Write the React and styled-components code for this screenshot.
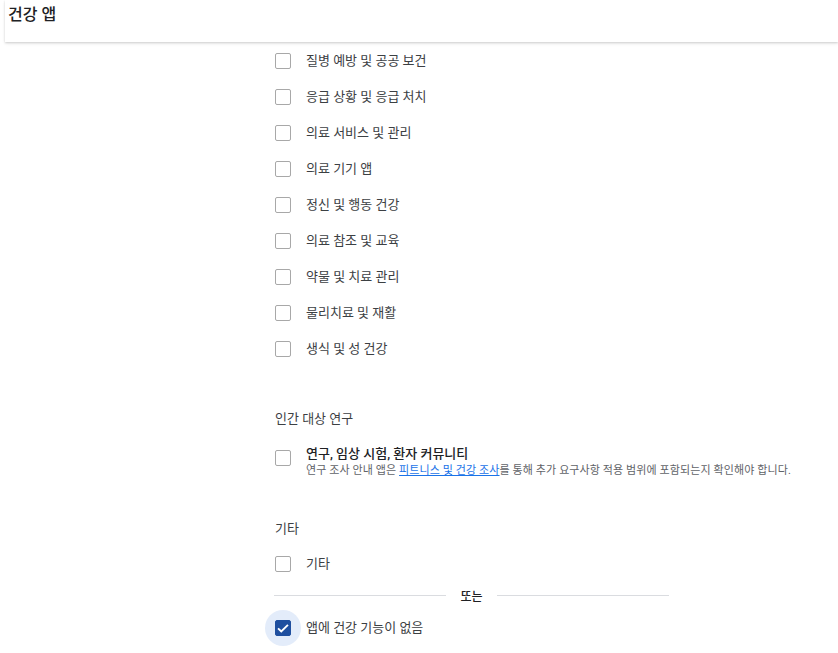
import React from "react";
import styled, { createGlobalStyle } from "styled-components";

const Global = createGlobalStyle`
  html, body { margin: 0; padding: 0; background: #fff; }
  body { font-family: Roboto, "Noto Sans CJK KR", sans-serif; color: #202124; }
`;

const Page = styled.div`
  width: 838px;
  height: 653px;
  overflow: hidden;
`;

const Header = styled.header`
  height: 42px;
  margin-left: 5px;
  padding-left: 3px;
  display: flex;
  align-items: flex-start;
  box-shadow: 0 1px 2px rgba(0, 0, 0, 0.16), 0 2px 4px rgba(0, 0, 0, 0.05);
  background: #fff;
  position: relative;
  z-index: 1;
`;

const Title = styled.h1`
  margin: 4px 0 0 0;
  font-size: 16px;
  line-height: 22px;
  font-weight: 500;
  color: #202124;
`;

const Content = styled.main`
  padding-left: 275px;
  padding-top: 1px;
  display: flex;
  flex-direction: column;
`;

const Row = styled.label`
  display: flex;
  align-items: center;
  height: 36px;
  margin-top: ${(p) => p.$mt || 0}px;
  font-size: 13px;
  color: #3c4043;
`;

const Box = styled.span`
  position: relative;
  flex: none;
  width: 16px;
  height: 16px;
  box-sizing: border-box;
  border: 1.5px solid ${(p) => (p.$checked ? "#1f4f9f" : "#a8a8a8")};
  border-radius: 2px;
  background: ${(p) => (p.$checked ? "#1f4f9f" : "#fff")};
  margin-top: ${(p) => p.$mt || 0}px;
  display: flex;
  align-items: center;
  justify-content: center;
  ${(p) =>
    p.$checked &&
    `&::before {
      content: "";
      position: absolute;
      left: -11.5px;
      top: -11.5px;
      width: 36px;
      height: 36px;
      border-radius: 50%;
      background: #e3ecfa;
      z-index: -1;
    }`}
`;

const BoxWrap = styled.span`
  position: relative;
  z-index: 0;
  display: flex;
`;

const ItemText = styled.span`
  margin-left: 15px;
  line-height: 20px;
`;

const SectionTitle = styled.div`
  margin-top: ${(p) => p.$mt}px;
  font-size: 13px;
  line-height: 20px;
  color: #3c4043;
`;

const ResearchRow = styled.label`
  display: flex;
  align-items: flex-start;
  margin-top: 16px;
`;

const TextCol = styled.div`
  margin-left: 15px;
  display: flex;
  flex-direction: column;
`;

const ResearchTitle = styled.span`
  font-size: 13px;
  line-height: 18px;
  font-weight: 500;
  color: #202124;
`;

const SubText = styled.span`
  font-size: 11px;
  line-height: 16px;
  letter-spacing: 0.1px;
  color: #5f6368;
  white-space: nowrap;
`;

const Link = styled.a`
  color: #1a73e8;
  text-decoration: underline;
`;

const Divider = styled.div`
  display: flex;
  align-items: center;
  width: 395px;
  height: 16px;
  margin-top: 5px;
  margin-left: -1px;
`;

const Line = styled.span`
  flex: 1;
  height: 1px;
  background: #dadce0;
`;

const DividerLabel = styled.span`
  padding: 0 14px;
  font-size: 12px;
  font-weight: 500;
  color: #202124;
`;

const items = [
  "질병 예방 및 공공 보건",
  "응급 상황 및 응급 처치",
  "의료 서비스 및 관리",
  "의료 기기 앱",
  "정신 및 행동 건강",
  "의료 참조 및 교육",
  "약물 및 치료 관리",
  "물리치료 및 재활",
  "생식 및 성 건강",
];

const Check = () => (
  <svg width="14" height="14" viewBox="0 0 24 24" fill="none">
    <path d="M3.5 12.5l5.5 5.5L20.5 6.5" stroke="#fff" strokeWidth="3.2" />
  </svg>
);

export default function App() {
  return (
    <Page>
      <Global />
      <Header>
        <Title>건강 앱</Title>
      </Header>
      <Content>
        {items.map((t) => (
          <Row key={t}>
            <Box />
            <ItemText>{t}</ItemText>
          </Row>
        ))}
        <SectionTitle $mt={42}>인간 대상 연구</SectionTitle>
        <ResearchRow>
          <Box $mt={5} />
          <TextCol>
            <ResearchTitle>연구, 임상 시험, 환자 커뮤니티</ResearchTitle>
            <SubText>
              연구 조사 안내 앱은 <Link href="#">피트니스 및 건강 조사</Link>를 통해 추가 요구사항 적용 범위에 포함되는지 확인해야 합니다.
            </SubText>
          </TextCol>
        </ResearchRow>
        <SectionTitle $mt={40}>기타</SectionTitle>
        <Row $mt={7}>
          <Box />
          <ItemText>기타</ItemText>
        </Row>
        <Divider>
          <Line />
          <DividerLabel>또는</DividerLabel>
          <Line />
        </Divider>
        <Row $mt={7}>
          <BoxWrap>
            <Box $checked>
              <Check />
            </Box>
          </BoxWrap>
          <ItemText>앱에 건강 기능이 없음</ItemText>
        </Row>
      </Content>
    </Page>
  );
}
